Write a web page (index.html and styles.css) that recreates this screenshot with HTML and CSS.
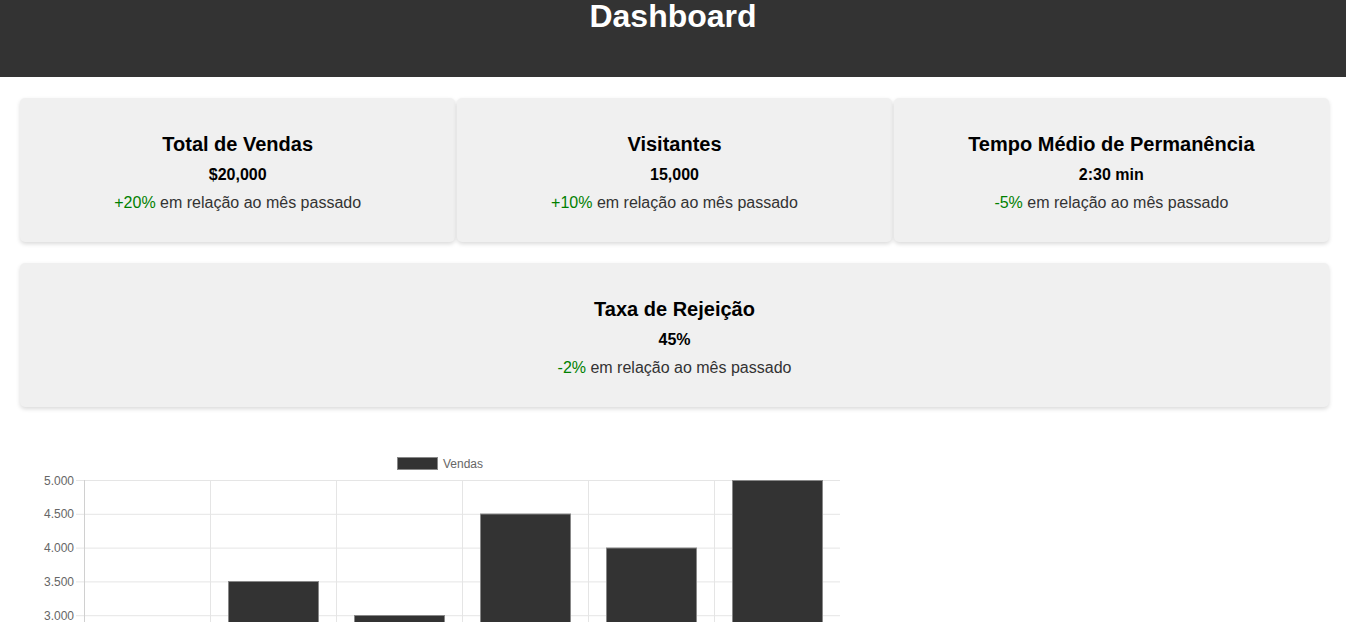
FILE: index.html
```html
<!DOCTYPE html>
<html lang="pt-BR">
<head>
<meta charset="UTF-8">
<title>Dashboard</title>
<link rel="stylesheet" href="styles.css">
</head>
<body>
<header class="topbar">
  <h1 class="topbar-title">Dashboard</h1>
</header>
<main class="content">
  <section class="card-row">
    <div class="card">
      <h2 class="card-title">Total de Vendas</h2>
      <p class="card-value">$20,000</p>
      <p class="card-change"><span class="pct">+20%</span> em relação ao mês passado</p>
    </div>
    <div class="card">
      <h2 class="card-title">Visitantes</h2>
      <p class="card-value">15,000</p>
      <p class="card-change"><span class="pct">+10%</span> em relação ao mês passado</p>
    </div>
    <div class="card">
      <h2 class="card-title">Tempo Médio de Permanência</h2>
      <p class="card-value">2:30 min</p>
      <p class="card-change"><span class="pct">-5%</span> em relação ao mês passado</p>
    </div>
  </section>
  <section class="card-row single">
    <div class="card">
      <h2 class="card-title">Taxa de Rejeição</h2>
      <p class="card-value">45%</p>
      <p class="card-change"><span class="pct">-2%</span> em relação ao mês passado</p>
    </div>
  </section>
  <section class="chart">
    <svg class="chart-svg" width="840" height="420" viewBox="0 0 840 420" xmlns="http://www.w3.org/2000/svg">
      <g class="legend">
        <rect x="377.5" y="10.5" width="40" height="12" fill="#333" stroke="#888" stroke-width="1"/>
        <text x="423" y="20.5" class="tick">Vendas</text>
      </g>
      <g stroke="#e5e5e5" stroke-width="1">
        <line x1="56" y1="33.5" x2="820" y2="33.5"/>
        <line x1="56" y1="67.3" x2="820" y2="67.3"/>
        <line x1="56" y1="101.1" x2="820" y2="101.1"/>
        <line x1="56" y1="134.9" x2="820" y2="134.9"/>
        <line x1="56" y1="168.7" x2="820" y2="168.7"/>
        <line x1="56" y1="202.5" x2="820" y2="202.5"/>
        <line x1="56" y1="236.3" x2="820" y2="236.3"/>
        <line x1="190.5" y1="33" x2="190.5" y2="420"/>
        <line x1="316.5" y1="33" x2="316.5" y2="420"/>
        <line x1="442.5" y1="33" x2="442.5" y2="420"/>
        <line x1="568.5" y1="33" x2="568.5" y2="420"/>
        <line x1="694.5" y1="33" x2="694.5" y2="420"/>
      </g>
      <line x1="64.5" y1="33" x2="64.5" y2="420" stroke="#d0d0d0" stroke-width="1"/>
      <g class="ticks" text-anchor="end">
        <text x="54" y="37.5" class="tick">5.000</text>
        <text x="54" y="71.3" class="tick">4.500</text>
        <text x="54" y="105.1" class="tick">4.000</text>
        <text x="54" y="138.9" class="tick">3.500</text>
        <text x="54" y="172.7" class="tick">3.000</text>
        <text x="54" y="206.5" class="tick">2.500</text>
        <text x="54" y="240.3" class="tick">2.000</text>
      </g>
      <g fill="#333" stroke="#888" stroke-width="1">
        <rect x="82.5" y="202.5" width="90" height="230"/>
        <rect x="208.5" y="134.5" width="90" height="300"/>
        <rect x="334.5" y="168.5" width="90" height="260"/>
        <rect x="460.5" y="67" width="90" height="360"/>
        <rect x="586.5" y="101" width="90" height="330"/>
        <rect x="712.5" y="33.5" width="90" height="400"/>
      </g>
    </svg>
  </section>
</main>
</body>
</html>
```

FILE: styles.css
```css
html, body {
  margin: 0;
  padding: 0;
  background: #ffffff;
  font-family: "Liberation Sans", Arial, Helvetica, sans-serif;
  color: #000;
}

.topbar {
  background: #333333;
  height: 77px;
  color: #ffffff;
  text-align: center;
}

.topbar-title {
  margin: 0;
  font-size: 32px;
  line-height: 32px;
  font-weight: bold;
}

.content {
  padding: 21px 17px 0 20px;
}

.card-row {
  display: grid;
  grid-template-columns: repeat(3, 1fr);
  gap: 1.5px;
}

.card-row.single {
  grid-template-columns: 1fr;
  margin-top: 21px;
}

.card {
  background: #f0f0f0;
  border-radius: 5px;
  box-shadow: 0 2px 4px rgba(0, 0, 0, 0.15);
  padding: 20px;
  text-align: center;
}

.card-title {
  margin: 15px 0 10px;
  font-size: 20px;
  font-weight: bold;
}

.card-value {
  margin: 10px 0;
  font-size: 16px;
  font-weight: bold;
}

.card-change {
  margin: 10px 0;
  font-size: 16px;
  color: #333;
}

.pct {
  color: #008000;
}

.chart {
  margin-top: 40px;
  width: 840px;
}

.chart-svg {
  display: block;
}

.tick {
  font-family: "Liberation Sans", Arial, Helvetica, sans-serif;
  font-size: 12px;
  fill: #666;
}
```
